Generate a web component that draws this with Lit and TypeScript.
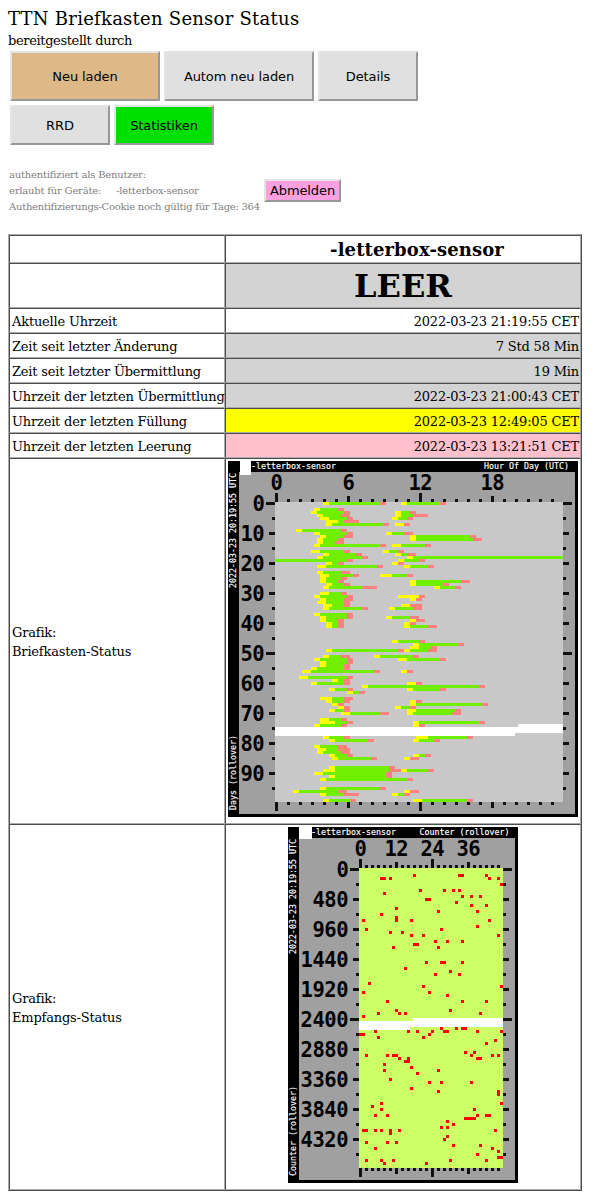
import { LitElement, html, css, svg } from "lit";
import { customElement, property } from "lit/decorators.js";

// [row, yellow start, green start, red start, end] in quarter-hour columns
const DAYS: number[][] = [
  [0,16,18,35,37],[0,42,44,55,57],[2,13,15,21,23],[3,12,14,23,25],[3,40,42,45,47],
  [4,14,16,22,25],[4,40,42,46,51],[5,15,18,24,26],[5,39,41,44,46],[6,17,21,23,28],
  [7,17,19,36,38],[7,40,43,43,45],[9,7,9,22,24],[10,13,15,24,26],[10,37,39,43,46],
  [11,15,17,23,26],[11,45,47,65,67],[12,14,16,21,23],[12,45,47,66,69],[13,14,16,20,23],
  [14,13,15,35,37],[14,39,42,50,52],[16,12,15,23,25],[16,36,38,41,43],[17,16,18,27,29],
  [17,40,42,44,47],[18,14,16,29,31],[18,44,46,96,96],[19,0,0,24,26],[19,41,43,48,50],
  [20,17,19,21,23],[20,39,41,41,43],[21,14,17,34,36],[21,43,45,51,53],[23,14,16,22,25],
  [24,15,18,26,28],[24,35,39,44,46],[25,15,17,22,24],[26,15,17,21,23],[26,45,47,62,65],
  [27,17,19,23,25],[27,45,47,56,58],[28,16,18,29,34],[28,53,55,60,62],[30,15,18,22,24],
  [31,13,15,24,26],[31,41,48,48,50],[32,15,17,23,26],[32,45,47,47,49],[33,14,17,23,25],
  [34,16,19,23,25],[34,42,45,45,49],[35,16,18,29,31],[35,38,40,46,49],[37,13,15,24,26],
  [38,15,17,24,26],[38,37,39,45,48],[39,15,17,21,23],[39,45,47,47,50],[40,17,19,21,23],
  [40,43,45,45,47],[41,17,19,21,23],[41,43,45,51,54],[46,39,41,48,50],[47,46,48,61,63],
  [48,45,48,52,54],[49,17,19,41,43],[49,43,45,51,54],[51,16,18,22,25],[51,33,35,46,48],
  [52,13,15,24,26],[52,41,44,55,57],[53,15,17,24,26],[54,15,17,23,25],[55,12,14,23,25],
  [56,9,12,33,35],[56,42,44,44,46],[58,8,11,24,26],[59,19,21,23,25],[60,12,14,23,25],
  [60,44,47,47,49],[61,29,31,68,70],[62,18,20,24,26],[62,44,46,55,57],[63,24,26,28,30],
  [65,15,19,23,26],[66,17,19,23,25],[66,45,47,47,49],[67,19,21,21,23],[67,45,47,69,71],
  [68,21,23,23,25],[68,40,42,45,47],[69,18,20,23,25],[69,44,47,60,62],[70,22,25,35,38],
  [70,44,46,59,62],[72,15,18,22,24],[73,15,20,24,26],[73,46,48,68,70],[74,13,15,22,24],
  [74,46,48,48,50],[78,16,18,23,25],[78,47,51,64,66],[79,18,20,31,33],[79,46,48,53,55],
  [81,13,15,21,24],[82,14,17,21,25],[83,14,16,22,25],[84,18,20,24,26],[84,46,48,50,52],
  [85,19,21,32,34],[85,43,45,45,48],[88,18,20,38,40],[89,16,20,38,42],[89,42,44,51,53],
  [90,13,16,37,39],[91,18,20,37,39],[92,15,17,44,46],[95,15,17,35,37],[96,6,8,21,24],
  [96,43,45,45,48],[97,15,17,23,28],[97,39,41,43,45],[99,16,18,25,27],[99,46,49,64,66],
];

// row -> columns of missed packets
const MISSED: Record<number, number[]> = {
  2:[18,33,34,42],3:[7,8,10,43,46],5:[47],7:[20,28,31,33],8:[8],9:[34,37,40],10:[22,23],11:[32],
  12:[37,42],13:[12],14:[26,39],15:[7],16:[12],17:[1,12,17,43],19:[39],20:[2,27],21:[10,14],
  22:[17,21,46],24:[25,29,34],25:[18,19],26:[11,26],31:[22,27,28,34],33:[15],34:[30],35:[25,33],
  38:[3],39:[21,47],41:[1,23],42:[29],44:[9,34,42],47:[12,30],48:[6,13,15,40],49:[1],
  53:[27,32,34,35],54:[5,16,19,24,28,29,39,47],55:[0,1,23],56:[6,21],57:[45],58:[42],61:[35,38],
  62:[2,9,11,12,37,44,46],63:[13,16,39,40],64:[15,16],65:[8],66:[17],67:[8,26],68:[19],70:[10],
  71:[23,27,37],73:[17],74:[26,46],75:[46],78:[7,47],79:[4],80:[7,38],82:[5,9,39,42,43],
  83:[35,36,37,38],84:[29],85:[31],86:[27,29],87:[1,2,5,7,10,13,45],88:[10],89:[29],90:[28],
  91:[2,9,12],92:[31,40],93:[5,44],94:[46],95:[39],96:[46,47],97:[2,7,11,30,42],98:[8,22],
};

const U = 3;
const TOP = 41;

@customElement("raster-chart")
class RasterChart extends LitElement {
  @property() kind: "days" | "packets" = "days";

  static styles = css`
    :host { display: block; line-height: 0; }
    svg { display: block; shape-rendering: crispEdges; }
    .big { font: bold 20.5px "DejaVu Sans Mono", monospace; fill: #000; }
    .small { font: 8.3px "DejaVu Sans Mono", monospace; fill: #fff; stroke: #fff; stroke-width: 0.15px; }
  `;

  private rect(x: number, y: number, w: number, h: number, fill: string) {
    return w > 0 ? svg`<rect x=${x} y=${y} width=${w} height=${h} fill=${fill}></rect>` : null;
  }

  private small(s: string, x: number, y: number, rotate = false) {
    return svg`<text class="small" textLength=${s.length * 5}
      transform=${`translate(${x} ${y})${rotate ? " rotate(-90)" : ""}`}>${s}</text>`;
  }

  private big(s: string, x: number, y: number) {
    return svg`<text class="big" x=${x} y=${y} textLength=${s.length * 12}>${s}</text>`;
  }

  render() {
    const days = this.kind === "days";
    const W = days ? 350 : 230;
    const left = days ? 47 : 71;
    const cols = days ? 96 : 48;
    const pw = cols * U;
    const bottom = TOP + 300;
    const step = days ? 4 : 2;
    const ticks = [];
    for (let c = 0; c < cols; c += step) {
      const h = c % (cols / 2) === 0 ? 9 : c % (cols / 4) === 0 ? 6 : 3;
      ticks.push(this.rect(left + c * U, TOP - h, U, h, "#111"), this.rect(left + c * U, bottom, U, h, "#111"));
    }
    for (let r = 0; r < 100; r += 5) {
      const w = r % 50 === 0 ? 9 : r % 10 === 0 ? 6 : 3;
      ticks.push(this.rect(left - w, TOP + r * U, w, U, "#111"), this.rect(left + pw, TOP + r * U, w, U, "#111"));
    }
    const labels = [];
    for (let i = 0; i < 4; i++) {
      const s = String(i * (days ? 6 : 12));
      labels.push(this.big(s, left + (i * pw) / 4 + 1.5 - s.length * 6, 29));
    }
    for (let i = 0; i < 10; i++) {
      const s = String(i * (days ? 10 : 480));
      labels.push(this.big(s, left - 10.5 - s.length * 12, TOP + 9 + i * 30));
    }
    const cell = (c: number, r: number, n: number, h: number, f: string) =>
      this.rect(left + c * U, TOP + r * U, n * U, h * U, f);
    const body = days
      ? [
          DAYS.map(([r, y, g, p, e]) => [
            cell(y, r, g - y, 1, "#ffff00"),
            cell(g, r, p - g, 1, "#70f000"),
            cell(p, r, e - p, 1, "#ff8080"),
          ]),
          cell(81, 74, 15, 1, "#fff"),
          cell(0, 75, 96, 2, "#fff"),
          cell(0, 77, 80, 1, "#fff"),
        ]
      : [
          cell(18, 50, 30, 1, "#fff"),
          cell(0, 51, 48, 2, "#fff"),
          cell(0, 53, 17, 1, "#fff"),
          Object.entries(MISSED).map(([r, cs]) => cs.map((c) => cell(c, +r, 1, 1, "#f00"))),
        ];
    const right = days ? "Hour Of Day (UTC)" : "Counter (rollover)";
    return html`<svg width=${W} height="356" viewBox="0 0 ${W} 356">
      ${this.rect(0, 0, W, 356, "#000")}
      ${this.rect(11, 11, W - 14, 342, "#a0a0a0")}
      ${this.rect(left, TOP, pw, 300, days ? "#c8c8c8" : "#ccff66")}
      ${ticks}${labels}${body}
      ${this.small("-letterbox-sensor", 23, 8)}
      ${this.rect(days ? 12 : 11, 0, days ? 11 : 13, days ? 14 : 12, "#fff")}
      ${this.small(right, days ? 256 : 131.5, 8)}
      ${this.small("2022-03-23 20:19:55 UTC", 8, 127, true)}
      ${this.small(days ? "Days (rollover)" : "Counter (rollover)", 8, 349, true)}
    </svg>`;
  }
}

@customElement("app-root")
class AppRoot extends LitElement {
  static styles = css`
    :host {
      display: block;
      box-sizing: border-box;
      width: 597px;
      height: 1199px;
      padding: 8px 0 0 8px;
      background: #fff;
      color: #000;
      font: 13px/19px "DejaVu Serif", serif;
      letter-spacing: -0.19px;
      white-space: nowrap;
      overflow: hidden;
    }
    .title { font-size: 18px; line-height: 22px; height: 22px; letter-spacing: 0.25px; }
    .by { height: 21px; line-height: 22px; letter-spacing: -0.36px; }
    .bar { display: flex; flex-wrap: wrap; gap: 4px; width: 420px; padding-left: 2px; }
    button {
      box-sizing: border-box;
      margin: 0;
      padding: 0;
      width: 100px;
      height: 50px;
      border: 2px solid;
      border-color: #e4e4e4 #989898 #989898 #e4e4e4;
      background: #e0e0e0;
      color: #000;
      font: 13px "DejaVu Sans", sans-serif;
      letter-spacing: -0.1px;
    }
    .wide { width: 150px; }
    .low { height: 40px; }
    .tan { background: #deb887; }
    .green { background: #00e000; }
    .auth { display: flex; align-items: center; height: 48px; margin: 22px 0 19px 1px; }
    .info { width: 255px; color: #808080; font-size: 10px; line-height: 16px; letter-spacing: -0.2px; }
    .dev { padding-left: 15px; }
    .cookie { letter-spacing: -0.26px; }
    .out { width: 77px; height: 23px; background: #ffa0e0; position: relative; top: -1px; }
    .table {
      display: grid;
      grid-template-columns: 216px 356px;
      grid-template-rows: 28px 45px repeat(6, 25px) 366px 366px;
      width: 572px;
      border: 1px solid;
      border-color: #aaa #4c4c4c #4c4c4c #aaa;
    }
    .cell {
      box-sizing: border-box;
      display: flex;
      align-items: center;
      padding: 2px 2px 0;
      border: 1px solid;
      border-color: #4c4c4c #aaa #aaa #4c4c4c;
    }
    .val { justify-content: flex-end; padding-right: 1px; }
    .head { justify-content: center; padding: 0 0 0 28px; font-size: 18px; font-weight: bold; letter-spacing: 0.1px; }
    .state { justify-content: center; font-size: 32px; font-weight: bold; letter-spacing: 0; }
    .grey { background: #d3d3d3; }
    .yellow { background: #ff0; }
    .pink { background: #ffc0cb; }
    .plot { align-items: flex-start; justify-content: center; padding: 2px 0 0; letter-spacing: 0; }
  `;

  private rows = [
    ["Aktuelle Uhrzeit", "2022-03-23 21:19:55 CET", ""],
    ["Zeit seit letzter Änderung", "7 Std 58 Min", "grey"],
    ["Zeit seit letzter Übermittlung", "19 Min", "grey"],
    ["Uhrzeit der letzten Übermittlung", "2022-03-23 21:00:43 CET", "grey"],
    ["Uhrzeit der letzten Füllung", "2022-03-23 12:49:05 CET", "yellow"],
    ["Uhrzeit der letzten Leerung", "2022-03-23 13:21:51 CET", "pink"],
  ];

  render() {
    return html`
      <div class="title">TTN Briefkasten Sensor Status</div>
      <div class="by">bereitgestellt durch</div>
      <div class="bar">
        <button class="wide tan">Neu laden</button>
        <button class="wide">Autom neu laden</button>
        <button>Details</button>
        <button class="low">RRD</button>
        <button class="low green">Statistiken</button>
      </div>
      <div class="auth">
        <div class="info">
          <div>authentifiziert als Benutzer:</div>
          <div>erlaubt für Geräte:<span class="dev">-letterbox-sensor</span></div>
          <div class="cookie">Authentifizierungs-Cookie noch gültig für Tage: 364</div>
        </div>
        <button class="out">Abmelden</button>
      </div>
      <div class="table">
        <div class="cell"></div>
        <div class="cell head">-letterbox-sensor</div>
        <div class="cell"></div>
        <div class="cell state grey">LEER</div>
        ${this.rows.map(
          ([k, v, c]) => html`<div class="cell">${k}</div><div class="cell val ${c}">${v}</div>`
        )}
        <div class="cell">Grafik:<br />Briefkasten-Status</div>
        <div class="cell plot"><raster-chart kind="days"></raster-chart></div>
        <div class="cell">Grafik:<br />Empfangs-Status</div>
        <div class="cell plot"><raster-chart kind="packets"></raster-chart></div>
      </div>
    `;
  }
}
